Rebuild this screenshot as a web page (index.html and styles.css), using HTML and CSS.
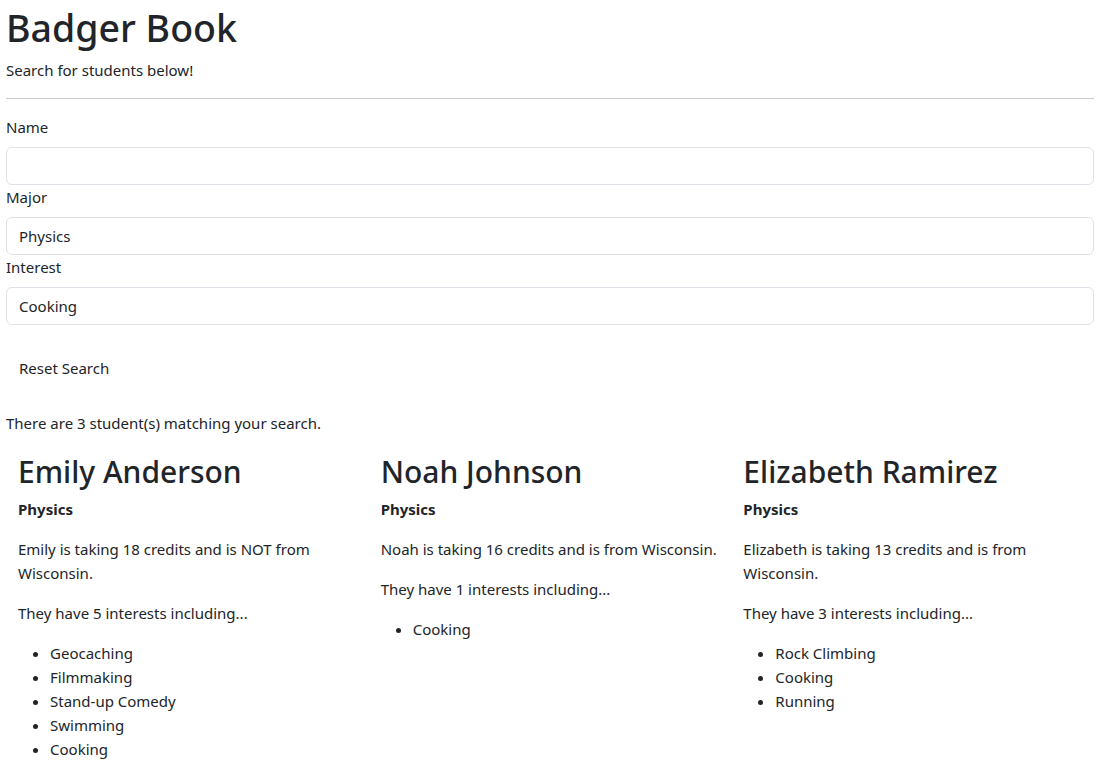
FILE: index.html
```html
<!DOCTYPE html>
<html lang="en">
<head>
<meta charset="utf-8">
<title>Badger Book</title>
<link rel="stylesheet" href="styles.css">
</head>
<body>
<div class="page">
  <h1 class="title">Badger Book</h1>
  <p class="lead-text">Search for students below!</p>
  <hr class="divider">
  <form class="search">
    <label class="form-label" for="name">Name</label>
    <input class="form-input" id="name" type="text" value="">
    <label class="form-label" for="major">Major</label>
    <input class="form-input" id="major" type="text" value="Physics">
    <label class="form-label" for="interest">Interest</label>
    <input class="form-input" id="interest" type="text" value="Cooking">
    <div class="actions">
      <button type="button" class="btn">Reset Search</button>
    </div>
  </form>
  <p class="count">There are 3 student(s) matching your search.</p>
  <div class="results">
    <div class="student">
      <h2 class="student-name">Emily Anderson</h2>
      <p class="major"><strong>Physics</strong></p>
      <p class="info">Emily is taking 18 credits and is NOT from Wisconsin.</p>
      <p class="info">They have 5 interests including...</p>
      <ul class="interests">
        <li>Geocaching</li>
        <li>Filmmaking</li>
        <li>Stand-up Comedy</li>
        <li>Swimming</li>
        <li>Cooking</li>
      </ul>
    </div>
    <div class="student">
      <h2 class="student-name">Noah Johnson</h2>
      <p class="major"><strong>Physics</strong></p>
      <p class="info">Noah is taking 16 credits and is from Wisconsin.</p>
      <p class="info">They have 1 interests including...</p>
      <ul class="interests">
        <li>Cooking</li>
      </ul>
    </div>
    <div class="student">
      <h2 class="student-name">Elizabeth Ramirez</h2>
      <p class="major"><strong>Physics</strong></p>
      <p class="info">Elizabeth is taking 13 credits and is from Wisconsin.</p>
      <p class="info">They have 3 interests including...</p>
      <ul class="interests">
        <li>Rock Climbing</li>
        <li>Cooking</li>
        <li>Running</li>
      </ul>
    </div>
  </div>
</div>
</body>
</html>
```
FILE: styles.css
```css
* { box-sizing: border-box; }
html, body { margin: 0; padding: 0; background: #fff; }
body {
  font-family: "Noto Sans", "Open Sans", sans-serif;
  font-size: 15px;
  line-height: 24px;
  color: #212529;
}
.page {
  padding: 2px 8px 0 6px;
}
.title {
  font-size: 37.5px;
  font-weight: 500;
  line-height: 48px;
  padding-top: 2px;
  margin: 0 0 6px;
}
.lead-text { margin: 0 0 16px; }
.divider {
  border: 0;
  border-top: 1px solid #c8c9ca;
  margin: 16px 0;
}
.search { display: flex; flex-direction: column; }
.form-label { display: block; margin-bottom: 8px; }
.form-input {
  display: block;
  width: 100%;
  height: 38px;
  padding: 6px 12px;
  font: inherit;
  color: #212529;
  background: #fff;
  border: 1px solid #dee2e6;
  border-radius: 6px;
}
.actions { margin-top: 24px; }
.btn {
  font: inherit;
  color: #212529;
  background: transparent;
  border: 1px solid transparent;
  border-radius: 6px;
  padding: 6px 12px;
  height: 38px;
}
.count { margin: 24px 0 16px; }
.results {
  display: grid;
  grid-template-columns: repeat(3, 1fr);
}
.student { padding: 0 12px; }
.student-name {
  font-size: 30px;
  font-weight: 500;
  line-height: 38.4px;
  padding-top: 2px;
  margin: 0 0 6px;
}
.major { margin: 0 0 16px; }
.major strong { font-weight: 700; }
.info { margin: 0 0 16px; }
.interests { margin: 0; padding-left: 32px; }
```
